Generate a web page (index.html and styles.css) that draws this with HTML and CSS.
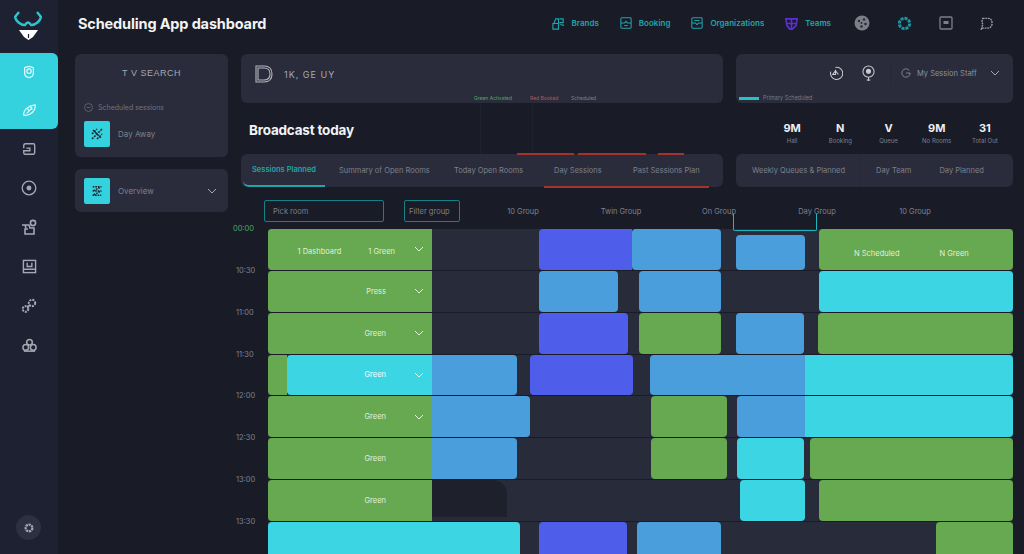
FILE: index.html
```html
<!DOCTYPE html>
<html lang="en">
<head>
  <meta charset="UTF-8" />
  <meta name="viewport" content="width=device-width, initial-scale=1.0" />
  <title>Scheduling App dashboard</title>
  <link rel="stylesheet" href="styles.css">
</head>
<body>
  <aside class="sidebar">
    <svg class="logo" viewBox="0 0 28 30" width="28" height="30">
      <path d="M5 2 L1 7 C2 11 6 15 11 15 Q14 10 17 15 C22 15 26 11 27 7 L23 2" fill="none" stroke="#2cc5cf" stroke-width="2.4"/>
      <path d="M5 20 H24 L19 27 L14.5 30 L10 27 Z" fill="#fff"/>
      <path d="M14.5 24 V28" stroke="#1d2132" stroke-width="1.2"/>
    </svg>
    <div class="side-active">
      <a class="side-link">
        <svg viewBox="0 0 16 16" width="14" height="14" fill="none" stroke="#e6fbfd" stroke-width="1.4"><path d="M3 3 L8 1.5 L13 3 V9 C13 12 10 14 8 14.5 C6 14 3 12 3 9 Z"/><circle cx="8" cy="7" r="2.5"/></svg>
      </a>
      <a class="side-link">
        <svg viewBox="0 0 16 16" width="15" height="15" fill="none" stroke="#e6fbfd" stroke-width="1.3"><path d="M2 13 C1 8 6 3 14 2 C15 8 9 14 2 13 Z M5 11 L11 5 M6 6 L8 9 M9 4 L11 7"/></svg>
      </a>
    </div>
    <a class="side-link">
      <svg viewBox="0 0 16 16" width="14" height="14" fill="none" stroke="#a5a8b2" stroke-width="1.6"><path d="M2 4 Q2 2 4 2 H13 Q14.5 2 14.5 4 V12 Q14.5 14 13 14 H3 Q2 14 2 12 V10 H9 V7 H5 M2 7 V4"/></svg>
    </a>
    <a class="side-link">
      <svg viewBox="0 0 16 16" width="16" height="16" fill="none" stroke="#a5a8b2" stroke-width="1.3"><circle cx="8" cy="8" r="6.8"/><circle cx="8" cy="8" r="1.8" fill="#a5a8b2"/></svg>
    </a>
    <a class="side-link">
      <svg viewBox="0 0 16 16" width="16" height="16" fill="none" stroke="#a5a8b2" stroke-width="1.6"><path d="M1 6 H8 L9 9 H13 V15 H4 V10 H7 M4 6 L5 9"/><circle cx="12" cy="4" r="2.6"/></svg>
    </a>
    <a class="side-link">
      <svg viewBox="0 0 16 16" width="15" height="15" fill="none" stroke="#a5a8b2" stroke-width="1.5"><rect x="1.5" y="1.5" width="13" height="13"/><path d="M1.5 11 H14.5 M5.5 4 V8 H10.5 V4"/></svg>
    </a>
    <a class="side-link">
      <svg viewBox="0 0 16 16" width="16" height="16" fill="none" stroke="#a5a8b2" stroke-width="2"><circle cx="4.5" cy="11" r="2.8" stroke-dasharray="2 1"/><circle cx="11" cy="5" r="3.2" stroke-dasharray="2 1"/><path d="M6 9 L9 7"/></svg>
    </a>
    <a class="side-link">
      <svg viewBox="0 0 16 16" width="15" height="15" fill="none" stroke="#a5a8b2" stroke-width="1.6"><circle cx="8" cy="4.5" r="3"/><circle cx="4" cy="10" r="3"/><circle cx="12" cy="10" r="3"/><path d="M2 14 H14"/></svg>
    </a>
    <button class="side-settings">
      <svg viewBox="0 0 16 16" width="12" height="12" fill="none" stroke="#a5a8b2" stroke-width="3"><circle cx="8" cy="8" r="4.5" stroke-dasharray="3 1"/></svg>
    </button>
  </aside>

  <main class="main">
    <header class="topbar">
      <h1>Scheduling App dashboard</h1>
      <nav class="topnav">
        <a class="nav-item">
          <svg viewBox="0 0 14 14" width="13" height="13" fill="none" stroke="#1fa6ad" stroke-width="1.2"><path d="M1 7 H7 V13 H1 Z M2 7 L4 2 H7 V7 M8 2 H12 V6 H8 M9 8 L13 9"/></svg>
          Brands
        </a>
        <a class="nav-item">
          <svg viewBox="0 0 14 14" width="12" height="12" fill="none" stroke="#1fa6ad" stroke-width="1.2"><rect x="1" y="1" width="12" height="12" rx="1"/><path d="M1 7 H5 L7 5 L9 7 H13 M5 10 H9"/></svg>
          Booking
        </a>
        <a class="nav-item">
          <svg viewBox="0 0 14 14" width="12" height="12" fill="none" stroke="#1fa6ad" stroke-width="1.2"><rect x="1" y="1" width="12" height="12" rx="1"/><path d="M1 7 H5 L7 9 L9 7 H13 M4 4 H10"/></svg>
          Organizations
        </a>
        <a class="nav-item">
          <svg viewBox="0 0 14 14" width="13" height="13" fill="none" stroke="#5b2fd0" stroke-width="1.8"><path d="M1 2 H13 L12 9 L8 13 H5 L2 9 Z M7 2 V13 M2 7 H12"/></svg>
          Teams
        </a>
        <span class="nav-icons">
          <svg viewBox="0 0 16 16" width="16" height="16"><circle cx="8" cy="8" r="7.5" fill="#7d7f88"/><circle cx="5" cy="6" r="1.3" fill="#2a2c38"/><circle cx="10" cy="4.5" r="1.3" fill="#2a2c38"/><circle cx="11.5" cy="9" r="1.3" fill="#2a2c38"/><circle cx="7.5" cy="11.5" r="1.3" fill="#2a2c38"/><circle cx="7.5" cy="8" r="1" fill="#2a2c38"/></svg>
          <svg viewBox="0 0 16 16" width="15" height="15" fill="none" stroke="#1a96a0" stroke-width="3.2"><circle cx="8" cy="8" r="5.5" stroke-dasharray="3.2 1"/></svg>
          <svg viewBox="0 0 14 14" width="14" height="14" fill="none" stroke="#7d7f88" stroke-width="1.3"><rect x="1" y="1" width="12" height="12" rx="1"/><rect x="4.5" y="5" width="5" height="3" fill="#7d7f88" stroke="none"/></svg>
          <svg viewBox="0 0 14 14" width="13" height="13" fill="none" stroke="#9a9ca5" stroke-width="1.5" stroke-dasharray="2 0.8"><path d="M3 1.5 H9 C12 1.5 13 4 13 7 C13 10 11 12 8 12 H3 L1.5 13 L3 8 L2 5 Z"/></svg>
        </span>
      </nav>
    </header>

    <div class="content">
      <div class="left-col">
        <section class="panel search-card">
          <p class="search-title">T V SEARCH</p>
          <p class="search-sub">
            <svg viewBox="0 0 10 10" width="9" height="9" fill="none" stroke="#6f7280" stroke-width="0.8"><circle cx="5" cy="5" r="4.4"/><path d="M3 5 H7"/></svg>
            Scheduled sessions
          </p>
          <div class="media-row">
            <span class="thumb">
              <svg viewBox="0 0 14 14" width="14" height="14" fill="none" stroke="#1c2b38" stroke-width="1.6" stroke-dasharray="2 1"><path d="M2 12 L12 2 M2 7 L7 2 M7 12 L12 7 M3 3 L11 11"/></svg>
            </span>
            <span class="media-label">Day Away</span>
          </div>
        </section>
        <section class="panel overview-card">
          <span class="thumb">
            <svg viewBox="0 0 14 14" width="12" height="12" fill="none" stroke="#1c2b38" stroke-width="1.7" stroke-dasharray="2 1"><path d="M2 2 H12 L2 7 H12 L2 12 H12"/></svg>
          </span>
          <span class="media-label">Overview</span>
          <svg class="chev" viewBox="0 0 10 6" width="10" height="6"><path d="M1 1 L5 5 L9 1" fill="none" stroke="#a5a8b2" stroke-width="1"/></svg>
        </section>
      </div>

      <div class="board">
        <div class="board-top">
          <section class="panel status-panel">
            <div class="status-head">
              <svg viewBox="0 0 18 18" width="18" height="18" fill="none" stroke="#b4b6bd" stroke-width="1.1"><path d="M1 1 H9 C14 1 17 4 17 9 C17 14 14 17 9 17 H1 Z M3 3 H9 C13 3 15 5 15 9 C15 13 13 15 9 15 H3 Z"/></svg>
              <span>1K, GE UY</span>
            </div>
            <div class="legend">
              <span class="legend-green">Green Activated</span>
              <span class="legend-red">Red Booked</span>
              <span class="legend-grey">Scheduled</span>
            </div>
          </section>

          <section class="panel session-panel">
            <div class="session-head">
              <svg viewBox="0 0 16 16" width="15" height="15" fill="none" stroke="#c9cbd1" stroke-width="1.1"><path d="M3 6 A6.5 6.5 0 1 0 8 1.5 M8 4 V9 H5 L8 5 L11 9"/></svg>
              <svg viewBox="0 0 14 18" width="13" height="17" fill="none" stroke="#c9cbd1" stroke-width="1.1"><circle cx="7" cy="7" r="6"/><circle cx="7" cy="6.5" r="2.2" fill="#c9cbd1"/><path d="M7 13 V17 M5 16 H9"/></svg>
              <div class="session-pick">
                <svg viewBox="0 0 12 12" width="10" height="10" fill="none" stroke="#8d909b" stroke-width="1"><path d="M10 3 A5 5 0 1 0 11 6 H6"/></svg>
                <span>My Session Staff</span>
                <svg class="chev" viewBox="0 0 10 6" width="10" height="6"><path d="M1 1 L5 5 L9 1" fill="none" stroke="#a5a8b2" stroke-width="1"/></svg>
              </div>
            </div>
            <div class="progress-row">
              <span class="progress-bar"></span>
              <span>Primary Scheduled</span>
            </div>
          </section>

          <div class="summary">
            <h2>Broadcast today</h2>
          </div>

          <div class="stats">
            <div class="stat"><b>9M</b><small>Hall</small></div>
            <div class="stat"><b>N</b><small>Booking</small></div>
            <div class="stat"><b>V</b><small>Queue</small></div>
            <div class="stat"><b>9M</b><small>No Rooms</small></div>
            <div class="stat"><b>31</b><small>Total Out</small></div>
          </div>

          <div class="tabs tabs-main">
            <a class="tab tab-active">Sessions Planned</a>
            <a class="tab">Summary of Open Rooms</a>
            <a class="tab">Today Open Rooms</a>
            <a class="tab">Day Sessions</a>
            <a class="tab">Past Sessions Plan</a>
            <i class="red-line red-a"></i>
            <i class="red-line red-b"></i>
            <i class="red-line red-c"></i>
            <i class="red-line red-d"></i>
          </div>

          <div class="tabs tabs-side">
            <a class="tab tab-wide">Weekly Queues &amp; Planned</a>
            <a class="tab">Day Team</a>
            <a class="tab">Day Planned</a>
          </div>
        </div>

        <div class="filters">
          <span class="field field-wide">Pick room</span>
          <span class="field field-small">Filter group</span>
          <span class="day">10 Group</span>
          <span class="day">Twin Group</span>
          <span class="day">On Group</span>
          <span class="day">Day Group</span>
          <span class="day">10 Group</span>
          <i class="bracket"></i>
        </div>

        <div class="schedule">
          <div class="row">
            <span class="time time-first">00:00</span>
            <div class="track">
              <div class="seg green lead lead-first"><span class="seg-note">1 Dashboard</span><span class="seg-note">1 Green</span><svg viewBox="0 0 10 6" width="10" height="6"><path d="M1 1 L5 5 L9 1"/></svg></div>
              <i style="width:107px"></i>
              <div class="seg indigo join-r" style="width:93px"></div>
              <div class="seg blue" style="width:89px"></div>
              <i style="width:15px"></i>
              <div class="seg blue inset" style="width:69px"></div>
              <i style="width:14px"></i>
              <div class="seg green notes" style="width:194px"><span>N Scheduled</span><span>N Green</span></div>
            </div>
          </div>
          <div class="row">
            <span class="time">10:30</span>
            <div class="track">
              <div class="seg green lead"><span>Press</span><svg viewBox="0 0 10 6" width="10" height="6"><path d="M1 1 L5 5 L9 1"/></svg></div>
              <i style="width:107px"></i>
              <div class="seg blue" style="width:79px"></div>
              <i style="width:21px"></i>
              <div class="seg blue" style="width:82px"></div>
              <i style="width:98px"></i>
              <div class="seg cyan" style="width:194px"></div>
            </div>
          </div>
          <div class="row">
            <span class="time">11:00</span>
            <div class="track">
              <div class="seg green lead"><span>Green</span><svg viewBox="0 0 10 6" width="10" height="6"><path d="M1 1 L5 5 L9 1"/></svg></div>
              <i style="width:107px"></i>
              <div class="seg indigo" style="width:89px"></div>
              <i style="width:11px"></i>
              <div class="seg green" style="width:82px"></div>
              <i style="width:15px"></i>
              <div class="seg blue" style="width:68px"></div>
              <i style="width:14px"></i>
              <div class="seg green" style="width:195px"></div>
            </div>
          </div>
          <div class="row">
            <span class="time">11:30</span>
            <div class="track">
              <div class="seg green join-r" style="width:19px"></div>
              <div class="seg cyan join-r lead-rest"><span>Green</span><svg viewBox="0 0 10 6" width="10" height="6"><path d="M1 1 L5 5 L9 1"/></svg></div>
              <div class="seg blue join-l" style="width:85px"></div>
              <i style="width:13px"></i>
              <div class="seg indigo" style="width:103px"></div>
              <i style="width:17px"></i>
              <div class="seg blue join-r" style="width:155px"></div>
              <div class="seg cyan join-l" style="width:208px"></div>
            </div>
          </div>
          <div class="row">
            <span class="time">12:00</span>
            <div class="track">
              <div class="seg green lead"><span>Green</span><svg viewBox="0 0 10 6" width="10" height="6"><path d="M1 1 L5 5 L9 1"/></svg></div>
              <div class="seg blue join-l" style="width:98px"></div>
              <i style="width:121px"></i>
              <div class="seg green" style="width:76px"></div>
              <i style="width:10px"></i>
              <div class="seg blue join-r" style="width:68px"></div>
              <div class="seg cyan join-l" style="width:208px"></div>
            </div>
          </div>
          <div class="row">
            <span class="time">12:30</span>
            <div class="track">
              <div class="seg green lead no-chev"><span>Green</span></div>
              <div class="seg blue join-l" style="width:85px"></div>
              <i style="width:134px"></i>
              <div class="seg green" style="width:76px"></div>
              <i style="width:10px"></i>
              <div class="seg cyan" style="width:67px"></div>
              <i style="width:6px"></i>
              <div class="seg green" style="width:203px"></div>
            </div>
          </div>
          <div class="row">
            <span class="time">13:00</span>
            <div class="track">
              <div class="seg green lead no-chev"><span>Green</span></div>
              <div class="seg shade" style="width:75px"></div>
              <i style="width:233px"></i>
              <div class="seg cyan" style="width:65px"></div>
              <i style="width:14px"></i>
              <div class="seg green" style="width:194px"></div>
            </div>
          </div>
          <div class="row">
            <span class="time">13:30</span>
            <div class="track">
              <div class="seg cyan" style="width:252px"></div>
              <i style="width:19px"></i>
              <div class="seg indigo" style="width:88px"></div>
              <i style="width:10px"></i>
              <div class="seg blue" style="width:84px"></div>
              <i style="width:215px"></i>
              <div class="seg green" style="width:77px"></div>
            </div>
          </div>
        </div>
      </div>
    </div>
  </main>
</body>
</html>
```

FILE: styles.css
```css
* {
  margin: 0;
  padding: 0;
  box-sizing: border-box;
}
html, body {
  height: 554px;
  overflow: hidden;
}
body {
  display: flex;
  background-color: #191b27;
  font-family: 'Inter', 'Liberation Sans', sans-serif;
  color: #8d909b;
}

/* Sidebar */
.sidebar {
  flex: 0 0 58px;
  height: 554px;
  display: flex;
  flex-direction: column;
  background-color: #1d2132;
}
.logo {
  margin: 10px 0 13px 14px;
  flex: none;
}
.side-active {
  background-color: #34d2de;
  border-radius: 0 6px 6px 0;
}
.side-link {
  height: 38px;
  display: flex;
  align-items: center;
  justify-content: center;
}
.sidebar > .side-link {
  height: 39.4px;
}
.side-settings {
  width: 25px;
  height: 25px;
  margin: auto 0 14px 16px;
  display: flex;
  align-items: center;
  justify-content: center;
  border: none;
  border-radius: 50%;
  background-color: #2c3040;
}

/* Top bar */
.main {
  flex: 1;
  min-width: 0;
}
.topbar {
  height: 54px;
  padding: 0 20px 8px 20px;
  display: flex;
  align-items: center;
  justify-content: space-between;
}
.topbar h1 {
  font-size: 14.5px;
  font-weight: 700;
  color: #f2f3f5;
  letter-spacing: -0.15px;
}
.topnav {
  display: flex;
  align-items: center;
  gap: 21px;
  padding-right: 11px;
}
.nav-item {
  display: flex;
  align-items: center;
  gap: 7px;
  font-size: 8px;
  font-weight: 600;
  color: #1fa6ad;
}
.nav-icons {
  display: flex;
  align-items: center;
  gap: 27px;
  margin-left: 2px;
}

/* Left column */
.content {
  display: flex;
  padding-left: 17px;
}
.left-col {
  flex: 0 0 153px;
  display: flex;
  flex-direction: column;
  gap: 12px;
}
.panel {
  background-color: #2a2c3b;
  border-radius: 6px;
}
.search-card {
  height: 103px;
  padding: 14px 9px 0;
}
.search-title {
  font-size: 9px;
  text-align: center;
  letter-spacing: 0.5px;
  color: #a5a8b2;
  font-family: 'Liberation Sans', sans-serif;
}
.search-sub {
  margin-top: 25px;
  display: flex;
  align-items: center;
  gap: 5px;
  font-size: 7px;
  color: #70737f;
}
.media-row {
  margin-top: 9px;
  display: flex;
  align-items: center;
}
.thumb {
  flex: none;
  width: 26px;
  height: 26px;
  display: flex;
  align-items: center;
  justify-content: center;
  background-color: #34d2de;
  border-radius: 2px;
}
.media-label {
  margin-left: 8px;
  font-size: 8px;
  color: #7d808c;
}
.overview-card {
  height: 43px;
  padding: 0 11px 0 9px;
  display: flex;
  align-items: center;
}
.chev {
  margin-left: auto;
}

/* Board */
.board {
  flex: 0 0 780px;
  margin-left: 5px;
}
.board-top {
  margin-left: 8px;
  display: grid;
  grid-template-columns: 482px 277px;
  grid-template-rows: 49px 51px 33px;
  column-gap: 13px;
}
.status-panel, .session-panel {
  display: flex;
  flex-direction: column;
  justify-content: space-between;
  padding-bottom: 1px;
}
.status-head {
  margin: 11px 0 0 14px;
  display: flex;
  align-items: center;
  gap: 11px;
  font-size: 9px;
  letter-spacing: 1px;
  color: #a5a8b2;
}
.legend {
  margin-left: 233px;
  display: flex;
  font-size: 5px;
  line-height: 7px;
}
.legend-green {
  width: 56px;
  color: #4aa868;
}
.legend-red {
  width: 41px;
  color: #b0585a;
}
.legend-grey {
  color: #7d808c;
}
.session-head {
  margin-top: 7px;
  padding-left: 92px;
  display: flex;
  align-items: center;
  gap: 19px;
}
.session-pick {
  flex: 1;
  height: 24px;
  margin-left: -4px;
  padding: 0 13px 0 10px;
  display: flex;
  align-items: center;
  gap: 6px;
  border-left: 1px solid #262836;
  font-size: 7.5px;
  color: #8d909b;
}
.progress-row {
  padding-left: 3px;
  display: flex;
  align-items: center;
  gap: 4px;
  font-size: 5.5px;
  line-height: 7px;
  color: #777a86;
}
.progress-bar {
  width: 20px;
  height: 3px;
  background-color: #22c3cc;
}
.summary {
  position: relative;
  padding: 19px 0 0 8px;
}
.summary h2 {
  font-size: 13.5px;
  font-weight: 700;
  color: #f2f3f5;
  letter-spacing: -0.2px;
}
.summary::after {
  content: "";
  position: absolute;
  top: 0;
  bottom: 0;
  left: 239px;
  width: 51px;
  border-left: 1px solid #1f2130;
  border-right: 1px solid #1f2130;
}
.stats {
  padding: 18px 4px 0 32px;
  display: grid;
  grid-template-columns: repeat(5, 1fr);
  text-align: center;
}
.stat b {
  display: block;
  font-size: 11px;
  line-height: 14px;
  color: #eceef0;
}
.stat small {
  display: block;
  font-size: 6px;
  line-height: 11px;
  color: #7d808c;
}
.tabs {
  position: relative;
  background-color: #2a2c3b;
  border-radius: 6px;
  font-size: 7.5px;
  color: #7d808c;
}
.tabs-main {
  padding-left: 2px;
  display: grid;
  grid-template-columns: 96px 115px 100px 79px auto;
  align-items: center;
}
.tab {
  white-space: nowrap;
}
.tab-active {
  align-self: stretch;
  width: 82px;
  display: flex;
  align-items: center;
  justify-content: center;
  border-bottom: 2px solid #1fa6ad;
  border-radius: 0 0 0 6px;
  font-weight: 600;
  color: #1fa6ad;
}
.red-line {
  position: absolute;
  height: 2px;
  background-color: #a5322f;
}
.red-a { top: -1px; left: 276px; width: 57px; }
.red-b { top: -1px; left: 337px; width: 68px; }
.red-c { top: -1px; left: 417px; width: 26px; }
.red-d { bottom: -1px; left: 303px; width: 165px; }
.tabs-side {
  padding-left: 16px;
  display: flex;
  align-items: center;
  gap: 28px;
}
.tab-wide {
  padding-right: 14px;
  margin-right: -12px;
  line-height: 33px;
  border-right: 1px solid #262836;
}

/* Filters */
.filters {
  position: relative;
  height: 22px;
  margin-top: 13px;
  padding-left: 31px;
  display: flex;
  align-items: center;
  font-size: 7.5px;
  color: #7d808c;
}
.field {
  flex: none;
  height: 22px;
  padding-left: 8px;
  display: flex;
  align-items: center;
  border: 1px solid #14808a;
  border-radius: 2px;
}
.field-wide {
  width: 120px;
}
.field-small {
  width: 56px;
  margin: 0 14px 0 20px;
  padding-left: 4px;
}
.day {
  flex: 0 0 98px;
  text-align: center;
}
.bracket {
  position: absolute;
  left: 500px;
  top: 14px;
  width: 84px;
  height: 17px;
  z-index: 1;
  border: 1px solid #1fb5be;
  border-top: none;
  border-radius: 0 0 2px 2px;
}

/* Schedule */
.schedule {
  margin-top: 7px;
  display: flex;
  flex-direction: column;
  gap: 1px;
}
.row {
  height: 40.85px;
  display: flex;
  flex: none;
}
.time {
  flex: 0 0 35px;
  margin-top: -5px;
  height: 10px;
  padding-left: 3px;
  font-size: 7.5px;
  line-height: 10px;
  color: #7d808c;
}
.time-first {
  padding-left: 0;
  color: #4aa868;
}
.track {
  flex: 0 0 745px;
  display: flex;
  background-color: #282b39;
}
.track i {
  flex: none;
}
.seg {
  flex: none;
  border-radius: 4px;
  display: flex;
  align-items: center;
  justify-content: flex-end;
  font-size: 7.5px;
  color: #e3f0dd;
}
.green { background-color: #66a951; }
.cyan { background-color: #3cd5e3; color: #f2fdff; }
.blue { background-color: #4b9edc; }
.indigo { background-color: #4f5eea; }
.shade {
  margin-bottom: 4px;
  background-color: #1e202c;
  border-radius: 0 14px 0 0;
}
.join-r { border-top-right-radius: 0; border-bottom-right-radius: 0; }
.join-l { border-top-left-radius: 0; border-bottom-left-radius: 0; }
.inset { margin-top: 6px; }
.lead {
  width: 164px;
  padding-right: 8px;
  border-radius: 4px 0 0 4px;
  gap: 28px;
}
.lead-first {
  gap: 19px;
  padding-bottom: 1px;
}
.lead-rest {
  width: 145px;
  padding-right: 8px;
  gap: 28px;
}
.no-chev {
  padding-right: 46px;
}
.seg svg {
  fill: none;
  stroke: #e3f0dd;
  stroke-width: 1;
}
.seg-note {
  margin-top: 6px;
}
.seg-note:first-child {
  margin-right: 8px;
}
.notes {
  justify-content: flex-start;
  gap: 40px;
  padding: 8px 0 0 35px;
}
```
